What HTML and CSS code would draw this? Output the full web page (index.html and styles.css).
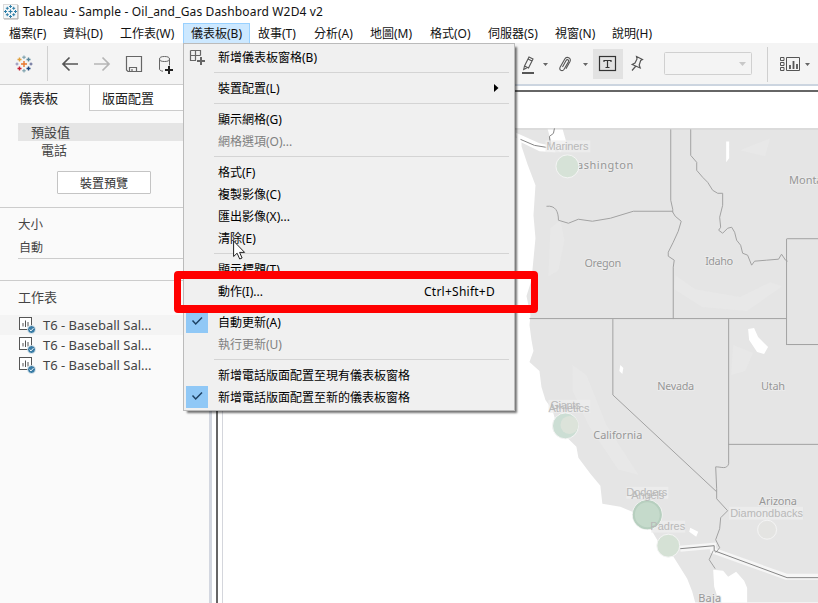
FILE: index.html
```html
<!DOCTYPE html>
<html lang="zh-Hant">
<head>
<meta charset="utf-8">
<title>Tableau - Sample - Oil_and_Gas Dashboard W2D4 v2</title>
<link rel="stylesheet" href="styles.css">
</head>
<body>
<svg width="0" height="0" class="defs" aria-hidden="true">
  <defs>
    <g id="plus-s"><path d="M-1.500 0H1.500M0 -1.500V1.500"/></g>
    <g id="sheet">
      <rect x=".5" y="1.500" width="12" height="12" fill="#fff" stroke="#555"/>
      <path d="M4 7v3.500M6.500 4.500v6.500M9 6v4.500" stroke="#555" fill="none"/>
      <circle cx="12.500" cy="13.500" r="4" fill="#3a7ca5" stroke="#fafafa" stroke-width=".8"/>
      <path d="M10.600 13.500l1.400 1.400 2.400-2.700" stroke="#fff" fill="none"/>
    </g>
    <g id="check"><path d="M6.500 9.500l3.200 3.500 6.300-6.500" fill="none" stroke="#1d4163" stroke-width="1.500"/></g>
  </defs>
</svg>
<div class="app">
  <header class="title">
    <svg class="logo" width="16" height="16" viewBox="0 0 16 16">
      <rect x=".5" y=".5" width="14" height="14" fill="#f6f8f9" stroke="#dadada"/>
      <path d="M15 1v14H1" stroke="#aaa" fill="none"/>
      <g stroke="#2f7fa8" stroke-width="1" fill="none">
        <path d="M7.500 5.500v4M5.500 7.500h4" stroke-width="1.200"/>
        <use href="#plus-s" x="7.500" y="2.500"/><use href="#plus-s" x="7.500" y="12.500"/>
        <use href="#plus-s" x="2.500" y="7.500"/><use href="#plus-s" x="12.500" y="7.500"/>
        <use href="#plus-s" x="4.300" y="4.300"/><use href="#plus-s" x="10.700" y="4.300"/>
        <use href="#plus-s" x="4.300" y="10.700"/><use href="#plus-s" x="10.700" y="10.700"/>
      </g>
    </svg>
    <span>Tableau - Sample - Oil_and_Gas Dashboard W2D4 v2</span>
  </header>
  <nav class="menubar">
    <span>檔案(F)</span><span>資料(D)</span><span>工作表(W)</span><span class="open">儀表板(B)</span><span>故事(T)</span><span>分析(A)</span><span>地圖(M)</span><span>格式(O)</span><span>伺服器(S)</span><span>視窗(N)</span><span>說明(H)</span>
  </nav>
  <div class="toolbar">
    <svg class="brand" width="18" height="18" viewBox="0 0 18 18" fill="none" stroke-width="1.400">
      <path d="M9 6v6M6 9h6" stroke="#e8762d"/>
      <path d="M9 .5v3.500M7.200 2.200h3.600" stroke="#7199a6" stroke-width="1"/>
      <path d="M9 14v3.500M7.200 15.800h3.600" stroke="#7199a6" stroke-width="1"/>
      <path d="M.5 9h3M2 7.500v3" stroke="#8a8ab5" stroke-width="1"/>
      <path d="M14.500 9h3M16 7.500v3" stroke="#59608f" stroke-width="1"/>
      <path d="M4.500 2.500v4M2.500 4.500h4" stroke="#e0a03c"/>
      <path d="M13.500 2.500v4M11.500 4.500h4" stroke="#5b879b"/>
      <path d="M4.500 11.500v4M2.500 13.500h4" stroke="#c72035"/>
      <path d="M13.500 11.500v4M11.500 13.500h4" stroke="#1f447d"/>
    </svg>
    <i class="divider"></i>
    <svg class="left-tools" width="115" height="30" viewBox="60 49 115 30" fill="none">
      <path d="M78 64H63M69.500 57.500L63 64l6.500 6.500" stroke="#555" stroke-width="1.700"/>
      <path d="M94 64h15M102.500 57.500L109 64l-6.500 6.500" stroke="#b5b5b5" stroke-width="1.700"/>
      <path d="M126.500 56.500h15v15h-13.500l-1.500-1.500z M129.500 71v-3.500h7v3.500M132 69v2" stroke="#666" stroke-width="1.200"/>
      <path d="M159.500 59.500v9.500c0 1 1 2 3.500 2.200M169.500 59.500v6" stroke="#666"/>
      <ellipse cx="164.500" cy="59" rx="5" ry="2.500" stroke="#666"/>
      <path d="M169 66v8M165 70h8" stroke="#222" stroke-width="2"/>
    </svg>
    <svg class="right-tools" width="303" height="40" viewBox="515 44 303 40" fill="none" stroke="#555">
      <path d="M529 57l4 2-4.500 9-4-2zM524.500 66l-.8 3.500 3-1.500M528 59l4 2" stroke-width="1.100"/>
      <path d="M522 73h12" stroke-width="2"/>
      <path d="M543 63h5l-2.500 3zM583 63h5l-2.500 3zM805 63h5l-2.500 3z" fill="#666" stroke="none"/>
      <path d="M562.500 67l3.600-6.500c1-1.800 3.200-.5 2.300 1.200l-4.300 7.500c-1.800 2.800-5.500 1-4-2l4.700-8.200c1.800-3.300 7-1 5.200 2.500l-4 7.200" stroke-width="1.100"/>
      <rect x="593" y="49" width="30" height="30" fill="#e2e2e2" stroke="none"/>
      <rect x="599.500" y="56.500" width="16" height="14" stroke="#333" stroke-width="1.200"/>
      <path d="M604 62v-1.500h7V62M607.500 60.500v7M605.500 67.500h4" stroke="#333" stroke-width="1.200"/>
      <path d="M636.500 56.500l6 3-1.800 1-1.500 4.500 1 3-8-3.500 2.800-1.500 2-4zM635.500 66.500l-3.500 4" stroke-width="1.200"/>
      <rect x="664.500" y="52.500" width="87" height="22" rx="1" stroke="#d0d0d0"/>
      <path d="M739 62h7l-3.500 4z" fill="#c8c8c8" stroke="none"/>
      <path d="M767.500 47v35" stroke="#cfcfcf"/>
      <path d="M780.500 57.500h3.500v3h-3.500zM780.500 62.500h3.500v3h-3.500zM780.500 67.500h3.500v3h-3.500zM786.500 57.500h13v13h-13z"/>
      <path d="M790 69v-4M793.500 69v-8M797 69v-5" stroke-width="1.800"/>
    </svg>
  </div>
  <div class="body">
    <aside>
      <div class="tabs"><b>儀表板</b><b class="off">版面配置</b></div>
      <div class="devices">
        <p class="chosen">預設值</p>
        <p class="phone">電話</p>
        <button>裝置預覽</button>
      </div>
      <div class="size"><p>大小</p><p class="select">自動</p></div>
      <div class="sheets">
        <p>工作表</p>
        <div class="sheet first"><svg width="18" height="18"><use href="#sheet"/></svg>T6 - Baseball Sal...</div>
        <div class="sheet"><svg width="18" height="18"><use href="#sheet"/></svg>T6 - Baseball Sal...</div>
        <div class="sheet"><svg width="18" height="18"><use href="#sheet"/></svg>T6 - Baseball Sal...</div>
      </div>
    </aside>
    <main>
      <div class="dash">
        <svg class="map" width="596" height="475" viewBox="222 128 596 475">
          <path fill="#e5e5e5" d="M515 128H818V603H695L692 592 687 579 677 563 670 552 658 542 648 525 640 520 632 512 620 507 602 504 600 486 590 474 578 458 576 447 565 436 556 424 552 410 545 400 541 387 539 371 529 362 533 351 531 340 529 325 530 315 526 296 531 280 535 238 533 215 535 185 527 164 521 146 521 140 515 137z"/>
          <g fill="#e8e8e8">
            <path d="M550 228l10-8 4 20-6 30-10 6zM572 365l14 10 20 50 32 50-20-5-30-45-16-35zM675 275l20 14 45 8 30-15 12 4-35 25-45-4-28-18zM733 345l20 8-8 18-14 4zM740 150l30-12-5 18z"/>
          </g>
          <path fill="#fff" d="M515 132l24 11 14 3 2 6-16-1-22-11zM547 128h15l4 14-6 10-8-6zM726 141h3v17l-3 4zM748 329l6-1 4 9 10 10-4 7-7-2-8-12zM620 365l3 3-1 6-3-3zM690 528l8 4-2 5-7-5zM713 570l10 1 5 6 8-5 8 9 3 7v15h-28l-5-16z"/>
          <path d="M680 549l33-3v5l73 26h32" fill="none" stroke="#f6f6f6" stroke-width="6"/>
          <g fill="none" stroke="#a2a2a2">
            <path d="M222 128.500H818" stroke="#ccc"/>
            <path d="M670.500 129v71l2 9v3M690.500 129v26l6 7v8l6 7 5 5 5 8 5 3h5v12l-3 12 1 10-2 3 4 3 5-5 4-1 3 5 2 8 4 5 2 8 5 2 4 10 3-4 12-1 12-1 3-5 4 6 2 1M546 206c9-1 12 5 12 14l10 3 10-4 14 2 18-3 23-7h39l3 5 6 5-3 10-5 11-5 10v4l6 4-1 7v52M529 318.500h257.500M786.500 345V238.500M787 238.500h31M787 344.500h31M612.500 319v76l104 97M728.500 319v145c-2 6-7 3-13 3l1 22v10l11 12-7 7-1 11-4 11 4 8-4 5M728 444.500h90M713 551l-4 9 6 9"/>
            <path d="M520 139l14 6 12 2M554 128l-1 5-4 3 1 9M680 549l34-3v5l73 27h31" stroke="#858585"/>
          </g>
          <g fill="#eee" fill-opacity=".75">
            <rect x="545" y="140" width="45" height="12"/><rect x="548" y="400" width="42" height="13"/><rect x="626" y="487" width="42" height="12"/><rect x="651" y="521" width="34" height="12"/><rect x="729" y="507" width="74" height="13"/>
          </g>
          <g class="states">
            <text x="566" y="169" textLength="67">Washington</text><text x="789" y="184">Montana</text><text x="584" y="267" textLength="37">Oregon</text><text x="705" y="265" textLength="28">Idaho</text><text x="657" y="390" textLength="37">Nevada</text><text x="761" y="390" textLength="24">Utah</text><text x="593" y="439" textLength="49">California</text><text x="759" y="505" textLength="38">Arizona</text><text x="698" y="602" textLength="23">Baja</text>
          </g>
          <g stroke="#f4f4f4">
            <circle cx="567" cy="166" r="11.500" fill="#d6e2d7"/><circle cx="565" cy="426" r="13" fill="#ccded4"/><circle cx="569" cy="425" r="9" fill="#dce3da" stroke="none"/><circle cx="647" cy="515" r="15" fill="#c5dacb"/><circle cx="647" cy="515" r="13.500" fill="none" stroke="#b7cfbf" stroke-width="2"/><circle cx="668" cy="546" r="11.500" fill="#d5e1d5"/><circle cx="767" cy="530" r="9.500" fill="#e4e4e2"/>
          </g>
          <g class="teams">
            <text x="546" y="150" textLength="42">Mariners</text><text x="550" y="409" textLength="30">Giants</text><text x="548" y="412" textLength="41">Athletics</text><text x="626" y="496" textLength="41">Dodgers</text><text x="631" y="499" textLength="33">Angels</text><text x="650" y="530" textLength="35">Padres</text><text x="730" y="517" textLength="73">Diamondbacks</text>
          </g>
        </svg>
      </div>
    </main>
  </div>
</div>
<div class="menu">
  <div class="item"><svg class="ico" width="22" height="22" fill="none" stroke="#666" stroke-width="1.200"><path d="M4.500 4.500h10v5M10 14.500H4.500v-10M9.500 4.500v10M4.500 9.500h10"/><path d="M15 11v8M11 15h8" stroke-width="2"/></svg>新增儀表板窗格(B)</div>
  <hr>
  <div class="item">裝置配置(L)<svg class="arrow" width="5" height="8"><path d="M0 0l4.500 4L0 8z"/></svg></div>
  <hr>
  <div class="item">顯示網格(G)</div>
  <div class="item dim">網格選項(O)...</div>
  <hr>
  <div class="item">格式(F)</div>
  <div class="item">複製影像(C)</div>
  <div class="item">匯出影像(X)...</div>
  <div class="item">清除(E)</div>
  <hr>
  <div class="item">顯示標題(T)</div>
  <div class="item">動作(I)...<span class="key">Ctrl+Shift+D</span></div>
  <hr>
  <div class="item"><svg class="ico on" width="22" height="22"><use href="#check"/></svg>自動更新(A)</div>
  <div class="item dim">執行更新(U)</div>
  <hr>
  <div class="item">新增電話版面配置至現有儀表板窗格</div>
  <div class="item"><svg class="ico on" width="22" height="22"><use href="#check"/></svg>新增電話版面配置至新的儀表板窗格</div>
</div>
<div class="frame"></div>
<svg class="cursor" width="13" height="20" viewBox="0 0 13 20"><path d="M.6 1v15.500l3.500-3.300 2.600 5.800 2.400-1-2.500-5.600h5z" fill="#fff" stroke="#222"/></svg>
</body>
</html>
```
FILE: styles.css
```css
* { box-sizing: border-box; }
body { margin: 0; width: 818px; height: 603px; overflow: hidden; background: #fff; color: #111; font: 12px/22px "Noto Sans", "Noto Sans CJK TC", sans-serif; }
p, hr { margin: 0; }
svg { display: block; flex: none; }
.defs { position: absolute; }
.app { display: flex; flex-direction: column; height: 603px; }
.title { display: flex; height: 23px; padding: 4px 0 0 3px; gap: 4px; line-height: 16px; letter-spacing: .15px; }
.menubar { display: grid; grid-template-columns: 54px 57px 72px 67px 55px 56px 60px 58px 67px 57px 60px; height: 20px; line-height: 21px; white-space: nowrap; }
.menubar span { padding-left: 9px; }
.menubar .open { padding-left: 7px; line-height: 19px; background: #cce8ff; border: 1px solid #99d1ff; }
.menubar .open + span { padding-left: 8px; }
.toolbar { display: flex; align-items: center; height: 41px; background: #f4f4f4; }
.brand { margin-left: 15px; }
.divider { width: 1px; height: 35px; margin: 0 12px 0 14px; background: #d0d0d0; }
.right-tools { margin-left: auto; }
.body { display: flex; flex: 1; min-height: 0; }
aside { width: 212px; background: #fafafa; border-right: 3px solid #d3d7e0; border-top: 1px solid #d0d0d0; color: #444; font-size: 13px; }
.tabs { display: flex; height: 26px; }
.tabs b { width: 89px; padding-left: 19px; font-weight: 400; line-height: 27px; color: #222; }
.tabs .off { flex: 1; padding-left: 12px; border: solid #ccc; border-width: 0 0 1px 1px; background: #fff; }
.devices { height: 97px; padding-top: 12px; border-bottom: 1px solid #ccc; line-height: 18px; }
.chosen { height: 18px; margin-left: 18px; padding-left: 13px; background: #e5e5e5; }
.phone { padding-left: 41px; }
button { display: block; width: 94px; height: 23px; margin: 12px 0 0 57px; padding: 0; border: 1px solid #c4c4c4; border-radius: 1px; background: #fff; color: #333; font: 12px/20px "Noto Sans CJK TC", sans-serif; }
.size { height: 73px; padding: 5px 0 0 18px; border-bottom: 1px solid #ccc; font-size: 12.500px; line-height: 23px; }
.size .select { height: 23px; padding-left: 1px; border-bottom: 1px solid #ccc; font-size: 12px; line-height: 24px; }
.sheets { padding-top: 5px; }
.sheets p { padding-left: 18px; height: 29px; }
.sheet { display: flex; align-items: center; height: 20px; padding-left: 19px; gap: 6px; line-height: 20px; }
.sheet.first { background: #f4f4f4; }
main { flex: 1; padding: 0 0 0 4px; border-top: 2px solid #ccd5e0; }
.dash { height: 100%; margin-top: 4px; padding: 36px 0 0 4px; border: solid #666; border-width: 2px 0 0 2px; }
.map { border-left: 1px solid #d4d6dc; }
.states { fill: #979797; font: 11px "Noto Sans", sans-serif; stroke: #ebebeb; stroke-width: 2px; paint-order: stroke; }
.teams { fill: #b8b8b8; font: 11px "Liberation Sans", sans-serif; }
.menu { position: absolute; left: 183px; top: 43px; width: 332px; height: 368px; padding: 2px; background: #f0f0f0; border: 1px solid #bbb; box-shadow: 3px 3px 2px -1px rgba(0,0,0,.55); color: #000; }
.item { position: relative; display: flex; height: 22px; padding: 0 17px 0 32px; line-height: 24px; white-space: nowrap; }
.dim { color: #808080; }
.ico { position: absolute; left: 0; top: 0; }
.on { background: #90c8f6; }
.arrow { margin: 7px 0 0 auto; margin-right: -4px; }
.key { margin-left: auto; letter-spacing: .25px; }
hr { height: 9px; margin: 0 3px 0 28px; border: 0; background: linear-gradient(#d4d4d4, #d4d4d4) 0 4px / 100% 1px no-repeat; }
.frame { position: absolute; left: 174px; top: 271px; width: 364px; height: 42px; border: 7px solid #f00; border-top-width: 8px; border-bottom-width: 8px; border-radius: 4px; }
.cursor { position: absolute; left: 233px; top: 240px; }
```
